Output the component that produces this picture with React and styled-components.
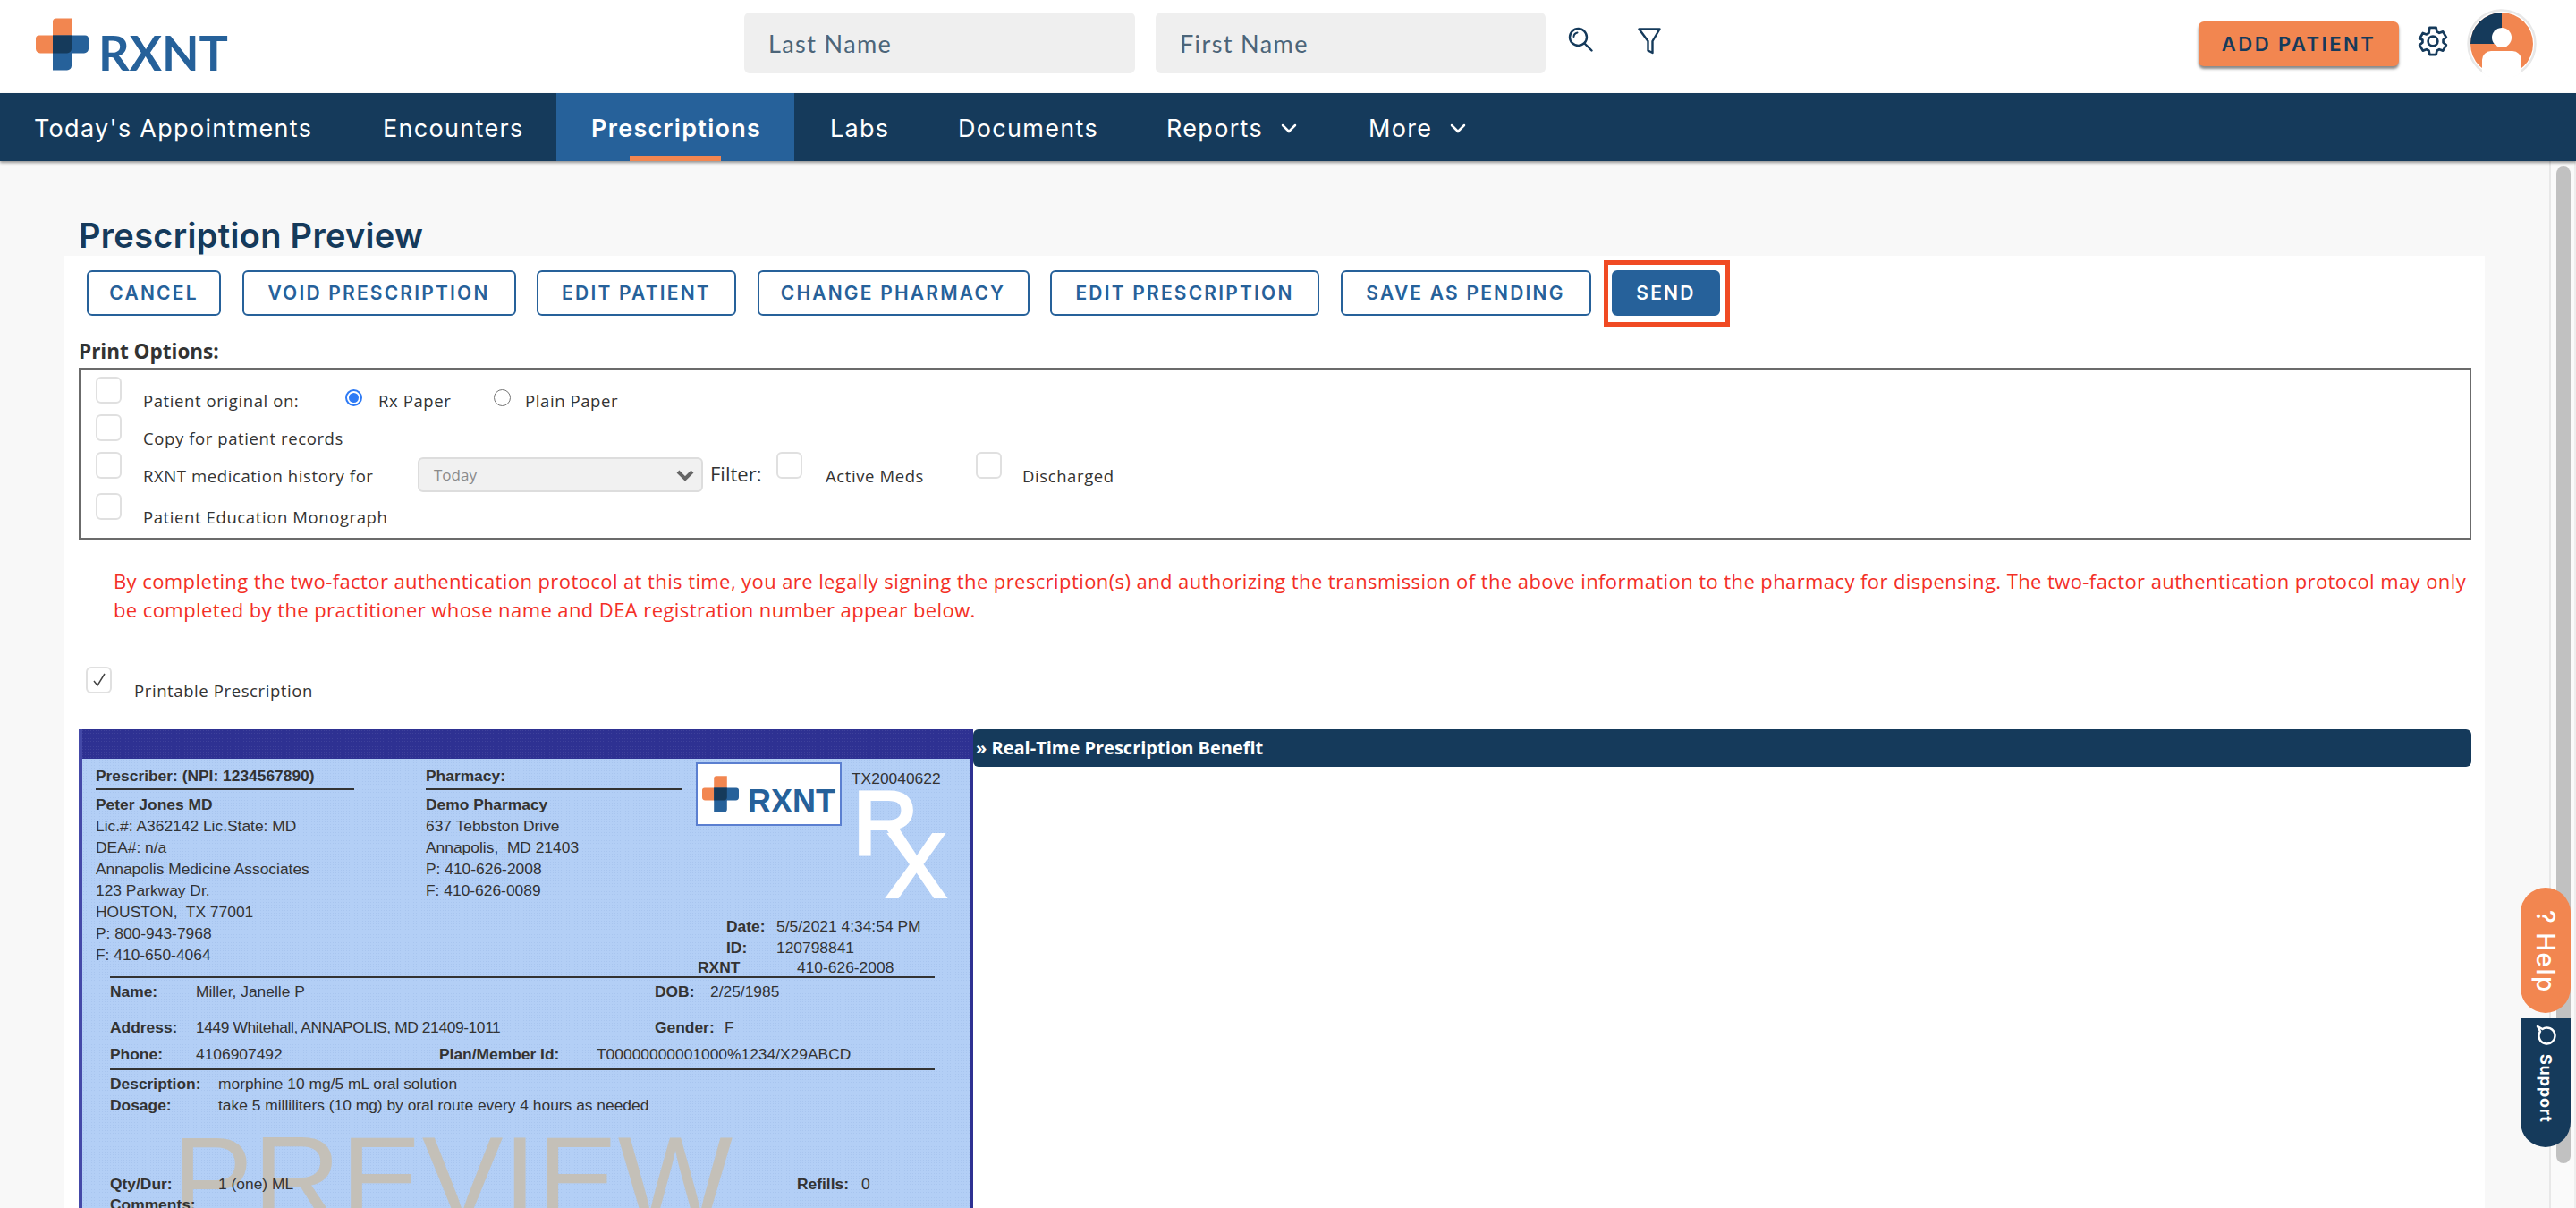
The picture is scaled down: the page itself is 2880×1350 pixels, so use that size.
import React from "react";
import styled, { createGlobalStyle } from "styled-components";

const NAVY = "#153a5b";
const BLUE = "#26619a";
const ORANGE = "#f28650";

const GlobalStyle = createGlobalStyle`
  html, body {
    margin: 0;
    padding: 0;
    background: #fff;
    font-family: "Open Sans", "Liberation Sans", sans-serif;
  }
  * {
    box-sizing: border-box;
  }
`;

const Page = styled.div`
  position: relative;
  width: 2880px;
  height: 1350px;
  overflow: hidden;
  display: flex;
  flex-direction: column;
`;

const Header = styled.header`
  height: 104px;
  flex: none;
  background: #fff;
  display: flex;
  align-items: flex-start;
  padding-left: 40px;
`;

const LogoLink = styled.div`
  display: flex;
  align-items: flex-start;
  width: 792px;
  padding-top: 20px;
`;

const LogoWord = styled.span`
  margin: 10px 0 0 11px;
  font-family: "Lato", sans-serif;
  font-weight: 700;
  font-size: 54px;
  line-height: 58px;
  letter-spacing: 0;
  color: ${BLUE};
`;

const SearchField = styled.div`
  width: ${(p) => p.$w}px;
  height: 68px;
  margin: 14px 23px 0 0;
  padding-left: 27px;
  background: #efefef;
  border-radius: 6px;
  display: flex;
  align-items: center;
  font-family: "Lato", sans-serif;
  font-size: 27px;
  letter-spacing: 1.4px;
  color: #4c6579;
`;

const IconSlot = styled.div`
  margin: ${(p) => p.$m};
  display: flex;
  color: ${NAVY};
`;

const AddPatient = styled.button`
  width: 224px;
  height: 50px;
  margin: 24px 19px 0 0;
  padding: 0;
  border: 0;
  border-radius: 6px;
  background: ${ORANGE};
  box-shadow: 0 3px 3px rgba(40, 40, 40, 0.55);
  font-family: "Inter", sans-serif;
  font-size: 22px;
  font-weight: 600;
  letter-spacing: 2.5px;
  color: ${NAVY};
`;

const Nav = styled.nav`
  position: relative;
  z-index: 2;
  height: 76px;
  flex: none;
  background: ${NAVY};
  box-shadow: 0 2px 3px rgba(0, 0, 0, 0.4);
  display: flex;
`;

const NavItem = styled.div`
  position: relative;
  width: ${(p) => p.$w}px;
  display: flex;
  align-items: center;
  padding: 2px 0 0 ${(p) => p.$pad}px;
  gap: 20px;
  color: #fff;
  font-family: "Inter", sans-serif;
  font-size: 27px;
  font-weight: ${(p) => (p.$active ? 600 : 400)};
  letter-spacing: 1.3px;
  background: ${(p) => (p.$active ? BLUE : "transparent")};

  &::after {
    content: ${(p) => (p.$active ? '""' : "none")};
    position: absolute;
    left: 82px;
    bottom: 0;
    width: 102px;
    height: 6px;
    background: ${ORANGE};
  }
`;

const Body = styled.div`
  flex: 1;
  display: flex;
  min-height: 0;
`;

const Scroller = styled.main`
  flex: 1;
  min-width: 0;
  background: #f8f8f8;
  padding: 0 72px;
  overflow: hidden;
`;

const Title = styled.h1`
  margin: 0;
  height: 106px;
  padding: 60px 0 0 16px;
  font-family: "Inter", sans-serif;
  font-size: 38px;
  line-height: 46px;
  font-weight: 600;
  letter-spacing: 0.3px;
  color: ${NAVY};
`;

const Panel = styled.section`
  background: #fff;
  height: 1100px;
  padding: 16px 15px 0 16px;
`;

const ActionBar = styled.div`
  display: flex;
  gap: 23.5px;
  padding-left: 9px;
`;

const ActionButton = styled.button`
  position: relative;
  width: ${(p) => p.$w}px;
  height: 51px;
  padding: 0;
  border: 2px solid ${BLUE};
  border-radius: 6px;
  background: ${(p) => (p.$primary ? BLUE : "#fff")};
  color: ${(p) => (p.$primary ? "#fff" : BLUE)};
  font-family: "Inter", sans-serif;
  font-size: 21px;
  font-weight: 600;
  letter-spacing: 2.2px;
`;

const Highlight = styled.span`
  position: absolute;
  left: -11px;
  right: -13px;
  top: -13px;
  bottom: -14px;
  border: 5px solid #f04a23;
`;

const SectionLabel = styled.div`
  margin-top: 24px;
  height: 32px;
  font-size: 22.5px;
  line-height: 32px;
  font-weight: 700;
  color: #333;
  font-family: "Open Sans", sans-serif;
`;

const OptionsBox = styled.div`
  margin-top: 2px;
  height: 192px;
  border: 2px solid #6b6b6b;
  padding: 8px 0 0 17px;
`;

const OptionRow = styled.div`
  display: flex;
  align-items: flex-start;
  height: ${(p) => p.$h}px;
`;

const Check = styled.span`
  flex: none;
  width: 29px;
  height: 30px;
  margin-left: ${(p) => p.$ml || 0}px;
  border: 2px solid #e0e0e0;
  border-radius: 6px;
  background: #fff;
  display: flex;
  align-items: center;
  justify-content: center;
`;

const OptionText = styled.span`
  flex: none;
  margin: 14px 0 0 ${(p) => p.$ml || 0}px;
  width: ${(p) => (p.$w ? `${p.$w}px` : "auto")};
  font-size: 18.5px;
  line-height: 26px;
  letter-spacing: 0.6px;
  white-space: nowrap;
  color: #333;
`;

const Radio = styled.span`
  flex: none;
  width: 19px;
  height: 19px;
  margin: 14px 0 0 ${(p) => p.$ml}px;
  border-radius: 50%;
  border: ${(p) => (p.$on ? "2px solid #2f7bf5" : "1.5px solid #767676")};
  background: #fff;
  display: flex;
  align-items: center;
  justify-content: center;

  &::after {
    content: "";
    display: ${(p) => (p.$on ? "block" : "none")};
    width: 11px;
    height: 11px;
    border-radius: 50%;
    background: #2f7bf5;
  }
`;

const FakeSelect = styled.div`
  flex: none;
  width: 319px;
  height: 39px;
  margin: 6px 8px 0 0;
  padding: 0 8px 0 16px;
  background: #f1f1f1;
  border: 2px solid #ddd;
  border-radius: 6px;
  display: flex;
  align-items: center;
  justify-content: space-between;
  font-size: 17px;
  color: #8a8a8a;
`;

const FilterLabel = styled.span`
  flex: none;
  width: 74px;
  margin-top: 8px;
  font-size: 22px;
  line-height: 32px;
  color: #333;
`;

const Warning = styled.p`
  margin: 30px 0 0 39px;
  width: 2640px;
  font-size: 22px;
  line-height: 32px;
  letter-spacing: 0.41px;
  color: #f32f26;
`;

const PrintableRow = styled.div`
  margin: 48px 0 0 8px;
  display: flex;
  align-items: flex-start;
  height: 40px;
`;

const Split = styled.div`
  margin-top: 30px;
  display: flex;
  align-items: flex-start;
`;

/* the printed form, a raster in the original */
const RxForm = styled.div`
  position: relative;
  flex: none;
  width: 1000px;
  height: 640px;
  overflow: hidden;
  border-left: 4px solid #4449a8;
  border-right: 3px solid #2e3192;
  background-color: #b3cff6;
  background-image: radial-gradient(rgba(70, 110, 180, 0.1) 1px, transparent 1px);
  background-size: 3px 3px;
  font-family: "Liberation Sans", Arial, sans-serif;
  font-size: 17.4px;
  color: #333;
`;

const RxBand = styled.div`
  height: 33px;
  margin-left: -4px;
  background-color: #2e3192;
  background-image: radial-gradient(rgba(255, 255, 255, 0.08) 1px, transparent 1px);
  background-size: 3px 3px;
`;

const ContactArea = styled.div`
  display: flex;
  height: 224px;
  padding: 7px 0 0 15px;
`;

const ContactColumn = styled.div`
  width: ${(p) => p.$w}px;
  margin-right: ${(p) => p.$mr}px;
`;

const ContactHead = styled.div`
  height: 28px;
  line-height: 24px;
  font-weight: 700;
  border-bottom: 2px solid #333;
  margin-bottom: 4px;
`;

const Line = styled.div`
  height: 24px;
  line-height: 24px;
  white-space: pre;
  font-weight: ${(p) => (p.$b ? 700 : 400)};
`;

const LogoTag = styled.div`
  position: absolute;
  left: 686px;
  top: 37px;
  width: 163px;
  height: 71px;
  padding: 0 0 13px 5px;
  background: #fff;
  border: 2px solid #5b7fd0;
  display: flex;
  align-items: flex-end;
  gap: 10px;
`;

const LogoTagWord = styled.span`
  margin-bottom: -2px;
  font-family: "Liberation Sans", sans-serif;
  font-weight: 700;
  font-size: 36px;
  line-height: 29px;
  color: ${BLUE};
`;

const LicenseNo = styled.span`
  position: absolute;
  left: 860px;
  top: 43px;
  line-height: 24px;
`;

const RxMark = styled.span`
  position: absolute;
  left: ${(p) => p.$l}px;
  top: ${(p) => p.$t}px;
  font-size: 100px;
  line-height: 100px;
  color: #fff;
  -webkit-text-stroke: 4px #fff;
`;

const DateBlock = styled.div`
  position: absolute;
  left: 720px;
  top: 208px;
  display: grid;
  grid-template-columns: 56px auto;
`;

const FieldRow = styled.div`
  position: relative;
  height: ${(p) => p.$h}px;
  margin: ${(p) => p.$mt || 0}px 0 0 31px;
  display: flex;
  align-items: center;
`;

const Cell = styled.span`
  flex: none;
  width: ${(p) => (p.$w ? `${p.$w}px` : "auto")};
  font-weight: ${(p) => (p.$b ? 700 : 400)};
  letter-spacing: ${(p) => (p.$tight ? "-0.4px" : "0")};
  white-space: nowrap;
`;

const FormRule = styled.div`
  height: 2px;
  width: 922px;
  margin: ${(p) => p.$mt || 0}px 0 0 31px;
  background: #333;
`;

const Watermark = styled.span`
  position: absolute;
  left: 100px;
  top: 435px;
  font-size: 136px;
  line-height: 136px;
  color: #c4c0b8;
`;

const BenefitBar = styled.div`
  flex: 1;
  height: 42px;
  padding-left: 3px;
  border-radius: 6px;
  background: ${NAVY};
  color: #fff;
  font-size: 20px;
  font-weight: 700;
  line-height: 42px;
`;

const ScrollTrack = styled.aside`
  flex: none;
  width: 30px;
  background: #fafafa;
  border-left: 2px solid #e8e8e8;
  border-right: 2px solid #eee;
  padding: 6px 4px 0 6px;
`;

const ScrollThumb = styled.div`
  width: 16px;
  height: 1114px;
  border-radius: 8px;
  background: #c1c1c1;
`;

const Tab = styled.div`
  position: absolute;
  left: 2818px;
  width: 56px;
  display: flex;
  align-items: center;
  justify-content: flex-start;
  writing-mode: vertical-rl;
  color: #fff;
`;

const HelpTab = styled(Tab)`
  top: 992px;
  height: 140px;
  padding-top: 25px;
  border-radius: 28px;
  background: ${ORANGE};
  font-family: "Inter", sans-serif;
  font-size: 28px;
  font-weight: 500;
  letter-spacing: 1.5px;
`;

const SupportTab = styled(Tab)`
  top: 1138px;
  height: 144px;
  padding-top: 6px;
  gap: 10px;
  border-radius: 0 0 28px 28px;
  background: ${NAVY};
  font-family: "Inter", sans-serif;
  font-size: 18px;
  font-weight: 700;
  letter-spacing: 0.8px;
`;

function CrossMark({ size = 59 }) {
  return (
    <svg width={size} height={size} viewBox="0 0 59 58">
      <path
        d="M19 4a4 4 0 0 1 4-4h17v39H5a5 5 0 0 1-5-5V23a4 4 0 0 1 4-4h15z"
        fill={ORANGE}
      />
      <path
        d="M19 19h36a4 4 0 0 1 4 4v11a5 5 0 0 1-5 5H40v14a5 5 0 0 1-5 5H19z"
        fill={BLUE}
      />
      <path d="M19 19h21v15a5 5 0 0 1-5 5H19z" fill={NAVY} />
    </svg>
  );
}

function SearchIcon() {
  return (
    <svg width="28" height="28" viewBox="0 0 28 28" fill="none" stroke="currentColor" strokeWidth="2.4">
      <circle cx="11.5" cy="11.5" r="9.5" />
      <path d="M18.5 18.5L26.5 26.5" strokeLinecap="round" />
      <path d="M6.5 11a5 5 0 0 1 4-4.5" strokeLinecap="round" strokeWidth="2" />
    </svg>
  );
}

function FilterIcon() {
  return (
    <svg width="26" height="30" viewBox="0 0 26 30" fill="none" stroke="currentColor" strokeWidth="2.4" strokeLinejoin="round">
      <path d="M1.5 1.5h23L16.5 15v13l-5-2.5V15z" />
    </svg>
  );
}

function GearIcon() {
  return (
    <svg width="38" height="38" viewBox="0 0 24 24" fill="none" stroke="currentColor" strokeWidth="1.7" strokeLinecap="round" strokeLinejoin="round">
      <path d="M9.7 2.500h4.600l.5 2.700 1.700 1 2.600-.9 2.300 4-2.100 1.800v1.800l2.100 1.800-2.300 4-2.600-.9-1.700 1-.5 2.700H9.700l-.5-2.700-1.700-1-2.600.9-2.300-4 2.100-1.800v-1.800L2.600 10.300l2.300-4 2.600.9 1.700-1z" />
      <circle cx="12" cy="12" r="3.400" />
    </svg>
  );
}

function Avatar() {
  return (
    <svg width="78" height="78" viewBox="0 0 78 78">
      <circle cx="39" cy="39" r="37.500" fill="#fff" stroke="#e8e8e8" strokeWidth="2.500" />
      <circle cx="39" cy="39" r="35" fill={ORANGE} />
      <path d="M39 4a35 35 0 0 0-35 35h35z" fill={NAVY} />
      <circle cx="39" cy="32" r="11" fill="#fff" />
      <path d="M17 71V57a10 10 0 0 1 10-10h24a10 10 0 0 1 10 10v14a35 35 0 0 1-44 0z" fill="#fff" />
    </svg>
  );
}

function Chevron() {
  return (
    <svg width="18" height="11" viewBox="0 0 18 11" fill="none" stroke="#fff" strokeWidth="2.500" strokeLinecap="round">
      <path d="M2 2l7 7 7-7" />
    </svg>
  );
}

function SelectArrow() {
  return (
    <svg width="20" height="14" viewBox="0 0 20 14" fill="none" stroke="#666" strokeWidth="4">
      <path d="M2 3l8 8 8-8" />
    </svg>
  );
}

function Tick() {
  return (
    <svg width="16" height="18" viewBox="0 0 16 18" fill="none" stroke="#444" strokeWidth="1.500">
      <path d="M2 10l4 5 8-13" />
    </svg>
  );
}

function Bubble() {
  return (
    <svg width="24" height="24" viewBox="0 0 24 24" fill="none" stroke="#fff" strokeWidth="2.500" strokeLinejoin="round">
      <path d="M3 3l5.500 3A9 9 0 1 1 6 8.500z" />
    </svg>
  );
}

const navItems = [
  { label: "Today's Appointments", w: 389, pad: 38 },
  { label: "Encounters", w: 233, pad: 39 },
  { label: "Prescriptions", w: 266, pad: 39, active: true },
  { label: "Labs", w: 144, pad: 40 },
  { label: "Documents", w: 232, pad: 39 },
  { label: "Reports", w: 227, pad: 40, menu: true },
  { label: "More", w: 185, pad: 39, menu: true },
];

const actions = [
  { label: "CANCEL", w: 150 },
  { label: "VOID PRESCRIPTION", w: 306 },
  { label: "EDIT PATIENT", w: 223 },
  { label: "CHANGE PHARMACY", w: 304 },
  { label: "EDIT PRESCRIPTION", w: 301 },
  { label: "SAVE AS PENDING", w: 280 },
];

const prescriber = [
  "Lic.#: A362142 Lic.State: MD",
  "DEA#: n/a",
  "Annapolis Medicine Associates",
  "123 Parkway Dr.",
  "HOUSTON,  TX 77001",
  "P: 800-943-7968",
  "F: 410-650-4064",
];

const pharmacy = [
  "637 Tebbston Drive",
  "Annapolis,  MD 21403",
  "P: 410-626-2008",
  "F: 410-626-0089",
];

export default function App() {
  return (
    <Page>
      <GlobalStyle />
      <Header>
        <LogoLink>
          <CrossMark />
          <LogoWord>RXNT</LogoWord>
        </LogoLink>
        <SearchField $w={437}>Last Name</SearchField>
        <SearchField $w={436}>First Name</SearchField>
        <IconSlot $m="30px 50px 0 2px">
          <SearchIcon />
        </IconSlot>
        <IconSlot $m="31px 601px 0 0">
          <FilterIcon />
        </IconSlot>
        <AddPatient>ADD PATIENT</AddPatient>
        <IconSlot $m="27px 19px 0 0">
          <GearIcon />
        </IconSlot>
        <IconSlot $m="10px 0 0 0">
          <Avatar />
        </IconSlot>
      </Header>
      <Nav>
        {navItems.map((item) => (
          <NavItem key={item.label} $w={item.w} $pad={item.pad} $active={item.active}>
            {item.label}
            {item.menu ? <Chevron /> : null}
          </NavItem>
        ))}
      </Nav>
      <Body>
        <Scroller>
          <Title>Prescription Preview</Title>
          <Panel>
            <ActionBar>
              {actions.map((a) => (
                <ActionButton key={a.label} $w={a.w}>
                  {a.label}
                </ActionButton>
              ))}
              <ActionButton $w={121} $primary>
                SEND
                <Highlight />
              </ActionButton>
            </ActionBar>
            <SectionLabel>Print Options:</SectionLabel>
            <OptionsBox>
              <OptionRow $h={42}>
                <Check />
                <OptionText $ml={24} $w={174}>Patient original on:</OptionText>
                <Radio $ml={52} $on />
                <OptionText $ml={18} $w={81}>Rx Paper</OptionText>
                <Radio $ml={48} />
                <OptionText $ml={16}>Plain Paper</OptionText>
              </OptionRow>
              <OptionRow $h={42}>
                <Check />
                <OptionText $ml={24}>Copy for patient records</OptionText>
              </OptionRow>
              <OptionRow $h={46}>
                <Check />
                <OptionText $ml={24} $w={307}>
                  RXNT medication history for
                </OptionText>
                <FakeSelect>
                  Today
                  <SelectArrow />
                </FakeSelect>
                <FilterLabel>Filter:</FilterLabel>
                <Check />
                <OptionText $ml={26} $w={168}>
                  Active Meds
                </OptionText>
                <Check />
                <OptionText $ml={23}>Discharged</OptionText>
              </OptionRow>
              <OptionRow $h={42}>
                <Check />
                <OptionText $ml={24}>Patient Education Monograph</OptionText>
              </OptionRow>
            </OptionsBox>
            <Warning>
              By completing the two-factor authentication protocol at this time, you are legally signing the
              prescription(s) and authorizing the transmission of the above information to the pharmacy for
              dispensing. The two-factor authentication protocol may only be completed by the practitioner whose
              name and DEA registration number appear below.
            </Warning>
            <PrintableRow>
              <Check>
                <Tick />
              </Check>
              <OptionText $ml={25}>Printable Prescription</OptionText>
            </PrintableRow>
            <Split>
              <RxForm>
                <RxBand />
                <ContactArea>
                  <ContactColumn $w={289} $mr={80}>
                    <ContactHead>Prescriber: (NPI: 1234567890)</ContactHead>
                    <Line $b>Peter Jones MD</Line>
                    {prescriber.map((l) => (
                      <Line key={l}>{l}</Line>
                    ))}
                  </ContactColumn>
                  <ContactColumn $w={287} $mr={0}>
                    <ContactHead>Pharmacy:</ContactHead>
                    <Line $b>Demo Pharmacy</Line>
                    {pharmacy.map((l) => (
                      <Line key={l}>{l}</Line>
                    ))}
                  </ContactColumn>
                </ContactArea>
                <LogoTag>
                  <CrossMark size={41} />
                  <LogoTagWord>RXNT</LogoTagWord>
                </LogoTag>
                <LicenseNo>TX20040622</LicenseNo>
                <RxMark $l={862} $t={55}>R</RxMark>
                <RxMark $l={899} $t={102}>X</RxMark>
                <DateBlock>
                  <Line $b>Date:</Line>
                  <Line>5/5/2021 4:34:54 PM</Line>
                  <Line $b>ID:</Line>
                  <Line>120798841</Line>
                </DateBlock>
                <FieldRow $h={19}>
                  <Cell $w={657} />
                  <Cell $b $w={111}>RXNT</Cell>
                  <Cell>410-626-2008</Cell>
                </FieldRow>
                <FormRule />
                <FieldRow $h={30}>
                  <Cell $b $w={96}>Name:</Cell>
                  <Cell $w={513}>Miller, Janelle P</Cell>
                  <Cell $b $w={62}>DOB:</Cell>
                  <Cell>2/25/1985</Cell>
                </FieldRow>
                <FieldRow $h={30} $mt={10}>
                  <Cell $b $w={96}>Address:</Cell>
                  <Cell $w={513} $tight>1449 Whitehall, ANNAPOLIS, MD 21409-1011</Cell>
                  <Cell $b $w={78}>Gender:</Cell>
                  <Cell>F</Cell>
                </FieldRow>
                <FieldRow $h={30}>
                  <Cell $b $w={96}>Phone:</Cell>
                  <Cell $w={272}>4106907492</Cell>
                  <Cell $b $w={176}>Plan/Member Id:</Cell>
                  <Cell>T00000000001000%1234/X29ABCD</Cell>
                </FieldRow>
                <FormRule $mt={1} />
                <FieldRow $h={30}>
                  <Cell $b $w={121}>Description:</Cell>
                  <Cell>morphine 10 mg/5 mL oral solution</Cell>
                </FieldRow>
                <FieldRow $h={18}>
                  <Cell $b $w={121}>Dosage:</Cell>
                  <Cell>take 5 milliliters (10 mg) by oral route every 4 hours as needed</Cell>
                </FieldRow>
                <Watermark>PREVIEW</Watermark>
                <FieldRow $h={30} $mt={64}>
                  <Cell $b $w={121}>Qty/Dur:</Cell>
                  <Cell $w={647}>1 (one) ML</Cell>
                  <Cell $b $w={72}>Refills:</Cell>
                  <Cell>0</Cell>
                </FieldRow>
                <FieldRow $h={16}>
                  <Cell $b>Comments:</Cell>
                </FieldRow>
              </RxForm>
              <BenefitBar>» Real-Time Prescription Benefit</BenefitBar>
            </Split>
          </Panel>
        </Scroller>
        <ScrollTrack>
          <ScrollThumb />
        </ScrollTrack>
      </Body>
      <HelpTab>? Help</HelpTab>
      <SupportTab>
        <Bubble />
        Support
      </SupportTab>
    </Page>
  );
}
